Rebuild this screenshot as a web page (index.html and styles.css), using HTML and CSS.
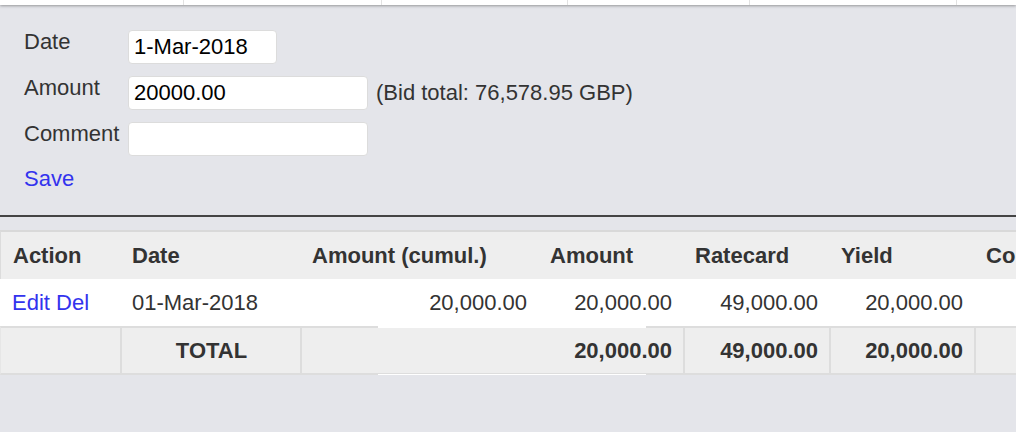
FILE: index.html
```html
<!DOCTYPE html>
<html lang="en">
<head>
    <meta charset="UTF-8">
    <meta name="viewport" content="width=device-width, initial-scale=1.0">
    <title>Bid Payments</title>
    <link rel="stylesheet" href="styles.css">
</head>
<body>
    <div class="strip">
        <span style="width: 183px"></span>
        <span style="width: 197px"></span>
        <span style="width: 185px"></span>
        <span style="width: 181px"></span>
        <span style="width: 206px"></span>
        <span class="last"></span>
    </div>

    <div class="panel">
        <div class="fields">
            <label for="payDate">Date</label>
            <div class="field"><input type="text" id="payDate" class="short" value="1-Mar-2018"></div>

            <label for="payAmount">Amount</label>
            <div class="field">
                <input type="text" id="payAmount" value="20000.00">
                <span class="note">(Bid total: 76,578.95 GBP)</span>
            </div>

            <label for="payComment">Comment</label>
            <div class="field"><input type="text" id="payComment"></div>
        </div>
        <a href="#" class="save">Save</a>
    </div>

    <div class="rule"></div>

    <div class="table-wrap">
        <table class="payments">
            <colgroup>
                <col style="width: 120px">
                <col style="width: 180px">
                <col style="width: 238px">
                <col style="width: 145px">
                <col style="width: 146px">
                <col style="width: 145px">
                <col style="width: 300px">
            </colgroup>
            <thead>
                <tr>
                    <th>Action</th>
                    <th>Date</th>
                    <th>Amount (cumul.)</th>
                    <th>Amount</th>
                    <th>Ratecard</th>
                    <th>Yield</th>
                    <th>Comment</th>
                </tr>
            </thead>
            <tbody>
                <tr>
                    <td><a href="#">Edit</a> <a href="#">Del</a></td>
                    <td>01-Mar-2018</td>
                    <td class="num">20,000.00</td>
                    <td class="num">20,000.00</td>
                    <td class="num">49,000.00</td>
                    <td class="num">20,000.00</td>
                    <td></td>
                </tr>
            </tbody>
            <tfoot>
                <tr>
                    <td class="first"></td>
                    <td class="label">TOTAL</td>
                    <td></td>
                    <td class="num open">20,000.00</td>
                    <td class="num">49,000.00</td>
                    <td class="num">20,000.00</td>
                    <td></td>
                </tr>
            </tfoot>
        </table>
        <!-- repaint leftover seen on the total row -->
        <div class="glitch"></div>
    </div>
</body>
</html>
```

FILE: styles.css
```css
body {
    margin: 0;
    font-family: "Liberation Sans", Arial, sans-serif;
    font-size: 22px;
    color: #333;
    background-color: #e4e5ea;
    overflow: hidden;
}
a {
    color: #3333ee;
    text-decoration: none;
}
.strip {
    display: flex;
    height: 5px;
    background: #fff;
    box-shadow: 0 1px 3px rgba(0, 0, 0, 0.35);
}
.strip span {
    flex: none;
    border-right: 1px solid #e2e2e2;
}
.strip .last {
    flex: 1;
    border-right: none;
}
.panel {
    padding: 25px 24px 24px 24px;
}
.fields {
    display: grid;
    grid-template-columns: 104px auto;
    row-gap: 12px;
    justify-content: start;
}
.fields label {
    line-height: 25px;
    margin-top: -1px;
}
.field {
    display: flex;
    align-items: baseline;
    gap: 8px;
}
.field input {
    box-sizing: border-box;
    width: 240px;
    height: 34px;
    padding: 0 5px;
    font-family: "Liberation Sans", Arial, sans-serif;
    font-size: 22px;
    color: #000;
    background: #fff;
    border: 1px solid #dcdcdc;
    border-radius: 4px;
    outline: none;
}
.field input.short {
    width: 149px;
}
.note {
    color: #333;
}
.save {
    display: block;
    margin-top: 10px;
    line-height: 25px;
    width: max-content;
}
.rule {
    height: 2px;
    background: #444;
}
.table-wrap {
    position: relative;
    margin-top: 13px;
    overflow: hidden;
}
.payments {
    table-layout: fixed;
    width: 1274px;
    border-collapse: separate;
    border-spacing: 0;
}
.payments th,
.payments td {
    padding: 11px 11px 11px 12px;
    line-height: 25px;
    text-align: left;
    white-space: nowrap;
    overflow: hidden;
}
.payments th {
    font-weight: bold;
    background: #eeeeee;
    border-top: 2px solid #d9d9d9;
}
.payments th:first-child {
    border-left: 1px solid #dcdcdc;
}
.payments tbody td {
    background: #fff;
}
.payments .num {
    text-align: right;
}
.payments tfoot td {
    padding-top: 10px;
    padding-bottom: 10px;
    font-weight: bold;
    background: #eeeeee;
    border-top: 2px solid #dddddd;
    border-bottom: 2px solid #dddddd;
    border-left: 2px solid #dddddd;
}
.payments tfoot td.first {
    border-left: 1px solid #e6e6e6;
}
.payments tfoot td.open {
    border-left: none;
}
.payments tfoot td.label {
    text-align: center;
}
.glitch {
    position: absolute;
    left: 378px;
    top: 96px;
    width: 268px;
    height: 50px;
    box-sizing: border-box;
    border-top: 2px solid #fff;
    border-bottom: 2px solid #fff;
    pointer-events: none;
}
```
